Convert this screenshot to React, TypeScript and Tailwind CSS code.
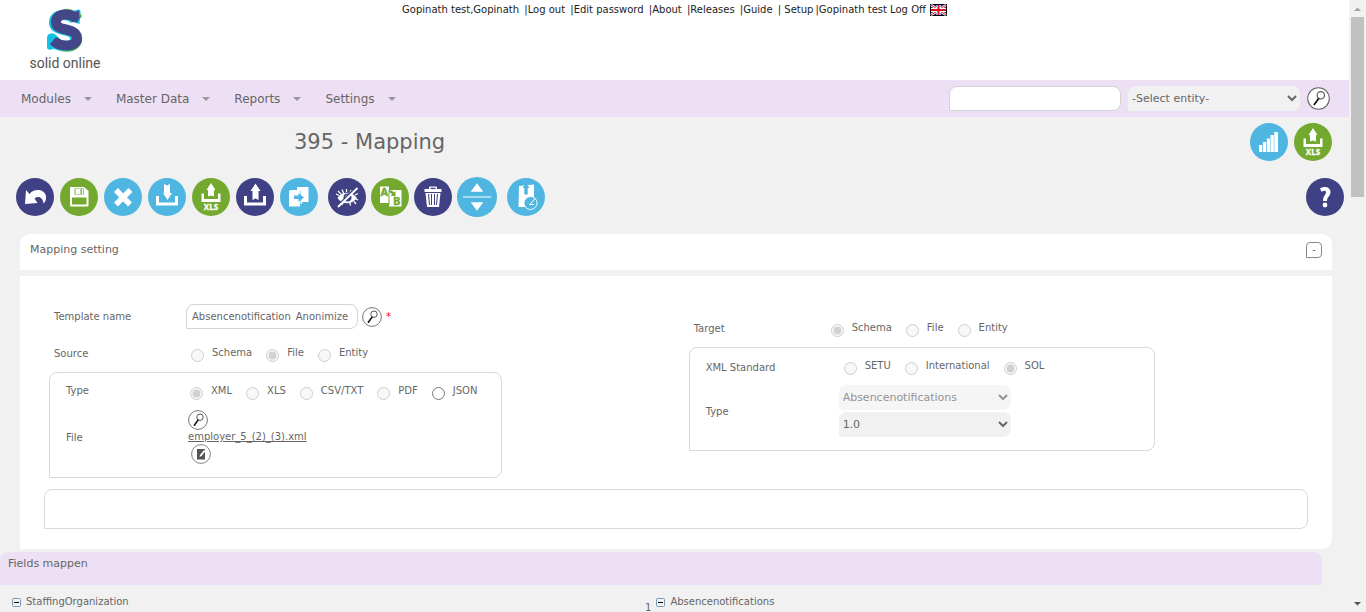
import { useId, type ReactNode } from "react";

const NAVY = "#3f4184";
const GREEN = "#72a92e";
const BLUE = "#4fb5e1";

function Logo() {
  const s =
    "M78 20 C75 15 71 14.500 66 14.500 C60 14.500 57 18 57 22 C57 27 61 28.500 67 29.500 C74 31 78 33 78 38.500 C78 43.500 73 45.500 67 45.500 C62 45.500 58 44 55 41";
  return (
    <svg viewBox="46 7 40 46" className="h-[46px] w-10" fill="none" aria-hidden="true">
      <path d="M50 34 Q54 32 57 35 L62 40 L54 49 Q48 51 48 47 V38 Q48 35 50 34Z" fill="#14c1e4" />
      <path d="M73 11 L80 9.500 Q82 10 81.500 14 L80.500 24 L74 22Z" fill="#14c1e4" />
      <path d="M57 45 C60 48 64 48.500 68 48.500 C76 48.500 80 44 80 38" stroke="#4db748" strokeWidth="6.500" />
      <path d="M62 11 C66 9 70 9 74 11" stroke="#4db748" strokeWidth="1.500" />
      <path d={s} stroke="#14c1e4" strokeWidth="10" transform="translate(-2 .5)" />
      <path d={s} stroke="#434787" strokeWidth="10" />
      <path d="M76 12 L80 10.500 L81 17 L77.500 23 L72 18Z M51 44 L57 37 L62 43 L56 48Z" fill="#434787" />
      <path d="M80 12 L83 16 L80.500 18.500Z" fill="#4db748" />
    </svg>
  );
}

function Flag() {
  return (
    <svg viewBox="0 0 17 12" className="ml-0.5 h-3 w-[17px]" aria-label="English" role="img">
      <rect width="17" height="12" fill="#000" />
      <rect x="1" y="1" width="15" height="10" fill="#1a2f9c" />
      <path d="M1 1 L16 11 M16 1 L1 11" stroke="#fff" strokeWidth="2.400" />
      <path d="M1 1 L16 11 M16 1 L1 11" stroke="#e0202c" strokeWidth="1" />
      <path d="M8.500 1 V11 M1 6 H16" stroke="#fff" strokeWidth="4" />
      <path d="M8.500 1 V11 M1 6 H16" stroke="#e0101c" strokeWidth="2" />
    </svg>
  );
}

function RoundButton({ color, label, big, children }: { color: string; label: string; big?: boolean; children: ReactNode }) {
  return (
    <button type="button" aria-label={label} title={label} className="shrink-0">
      <svg viewBox="0 0 38 38" className={big ? "size-10" : "size-[38px]"} fill="#fff">
        <circle cx="19" cy="19" r="19" fill={color} />
        {children}
      </svg>
    </button>
  );
}

const trayUp = (
  <>
    <path d="M19 5 L23.500 12 H22 V18.500 L19 17.500 L16 18.500 V12 H14.500Z" />
    <path d="M9.500 15.500 H12 V21 H26 V15.500 H28.500 V24 H9.500Z" />
    <text x="19" y="32" fontSize="8" fontWeight="700" fontFamily="Open Sans, sans-serif" textAnchor="middle" stroke="#fff" strokeWidth=".3">XLS</text>
  </>
);

const bars = (
  <path d="M9 22 h3.200 v7 h-3.200z M12.900 19 h3.200 v10 h-3.200z M16.800 15.500 h3.200 v13.500 h-3.200z M20.500 12 h3.300 v17 h-3.300z M24.300 9 h3.700 v20 h-3.700z" />
);

function Magnifier({ large }: { large?: boolean }) {
  return (
    <svg viewBox="0 0 20 20" className={large ? "size-[23px]" : "size-5"} fill="none">
      <circle cx="10" cy="10" r="9.400" fill="#fff" stroke="#666" strokeWidth=".9" />
      <circle cx="12" cy="7.200" r="3.200" stroke="#555" strokeWidth="1" />
      <path d="M10.300 9.700 L6 15.700" stroke="#111" strokeWidth="1.500" />
    </svg>
  );
}

function NavItem({ children }: { children: ReactNode }) {
  return (
    <button type="button" className="flex items-center gap-[13px] text-[12px]">
      {children}
      <svg viewBox="0 0 8 4" className="h-1 w-2" fill="#999"><path d="M0 0H8L4 4Z" /></svg>
    </button>
  );
}

function RadioGroup({ options, value, enabled = [] }: { options: string[]; value: string; enabled?: string[] }) {
  const name = useId();
  return (
    <div className="flex items-start gap-3.5">
      {options.map((o) => (
        <label key={o} className="flex items-start gap-2 leading-3 whitespace-nowrap">
          <input type="radio" name={name} defaultChecked={o === value} disabled={!enabled.includes(o)} className="mt-0.5 size-[13px] shrink-0" />
          {o}
        </label>
      ))}
    </div>
  );
}

function Toggle() {
  return (
    <svg viewBox="0 0 9 9" className="size-[9px]">
      <rect x=".5" y=".5" width="8" height="8" rx="1" fill="#f4f2ee" stroke="#7898b5" />
      <path d="M2 4.500H7" stroke="#000" />
    </svg>
  );
}

const separated = ["Log out", "Edit password", "About", "Releases", "Guide"];
const selectClass = "h-[25px] w-[172px] rounded-lg rounded-bl-none bg-[#f1f1f1] text-[11px]";

export default function App() {
  return (
    <div className="flex h-screen overflow-hidden bg-[#f1f1f1] font-['DejaVu_Sans',Verdana,sans-serif] text-[10px] text-[#666]">
      <div className="min-w-0 flex-1">
        <header className="flex h-20 items-start bg-white">
          <div className="flex w-[130px] shrink-0 flex-col items-center pt-[7px]">
            <Logo />
            <span className="font-['Roboto',sans-serif] text-[14px] leading-5 text-[#555]">solid online</span>
          </div>
          <nav className="flex flex-1 items-center justify-center gap-0.5 pt-1 pr-[130px] leading-3 whitespace-pre text-[#222]">
            <span>Gopinath test,Gopinath </span>
            {separated.map((t) => (
              <span key={t}>|<a href="#">{t}</a> </span>
            ))}
            <span>| <a href="#">Setup</a></span>
            <span>|<a href="#">Gopinath test Log Off</a></span>
            <Flag />
          </nav>
        </header>

        <div className="flex h-[37px] items-center justify-between bg-[#ede0f4] pr-[19px] pl-[21px]">
          <nav className="flex gap-6">
            <NavItem>Modules</NavItem>
            <NavItem>Master Data</NavItem>
            <NavItem>Reports</NavItem>
            <NavItem>Settings</NavItem>
          </nav>
          <div className="flex items-center gap-[7px]">
            <input aria-label="Search" className="h-[25px] w-[172px] rounded-lg rounded-bl-none border border-[#d3d3d3] bg-white px-1.5" />
            <select aria-label="Entity" className={selectClass}>
              <option>-Select entity-</option>
            </select>
            <button type="button" aria-label="Search entity"><Magnifier large /></button>
          </div>
        </div>

        <div className="flex items-center justify-between pt-1.5 pr-[17px] pl-[294px]">
          <h1 className="text-[21px] leading-[38px]">395 - Mapping</h1>
          <div className="flex gap-1.5">
            <RoundButton color={BLUE} label="Statistics">{bars}</RoundButton>
            <RoundButton color={GREEN} label="Export XLS">{trayUp}</RoundButton>
          </div>
        </div>

        <div className="flex h-[73px] items-center justify-between pr-[5px] pb-0.5 pl-4">
          <div className="flex items-center gap-2.5">
            <div className="flex gap-1.5">
              <RoundButton color={NAVY} label="Back">
                <path d="M10 12 L13.500 16 C17 11 28 10 30 18 C30.500 22 29 24 27.500 25.500 C27 19.500 22.500 17.500 18.500 20.500 L21.500 25 L9 26Z" />
              </RoundButton>
              <RoundButton color={GREEN} label="Save">
                <path fillRule="evenodd" d="M10.500 9 H24 L28.500 13 V27.500 Q28.500 28.500 27.500 28.500 H11.500 Q10 28.500 10 27 V10 Q10 9 10.500 9Z M12 19.500 V26.500 H26.500 V19.500Z M14.500 10.500 V16.500 H24 V10.500Z" />
                <path d="M15.500 11 H20.500 V16 H15.500Z M21.800 11 h1.500 v5 h-1.500z" />
              </RoundButton>
              <RoundButton color={BLUE} label="Delete">
                <path d="M12 12 L26 26.500 M26.500 12 L12 26.500" stroke="#fff" strokeWidth="5.500" />
              </RoundButton>
              <RoundButton color={BLUE} label="Import">
                <path d="M16 6 L19 7.500 L22 6 V15 H24 L19.500 22 L15 15 H16Z M8 18 H11 V24.500 H27 V18 H30 V27.500 H8Z" />
              </RoundButton>
              <RoundButton color={GREEN} label="Export XLS">{trayUp}</RoundButton>
              <RoundButton color={NAVY} label="Export">
                <path d="M19.500 5.500 L24.500 13 H22.500 V22 L19.500 20.500 L16.500 22 V13 H14.500Z M8 18 H11 V24.500 H27 V18 H30 V27.500 H8Z" />
              </RoundButton>
              <RoundButton color={BLUE} label="Copy">
                <path d="M17 9 H28.500 V24 H22 V26 H20.500 V12.500 H17Z" />
                <path d="M9 13 L10.500 12 H20 V28.500 H9Z" />
                <path d="M14 17.500 H18.500 V15 L24 19.500 L18.500 24 V21 H14Z" fill={BLUE} />
              </RoundButton>
            </div>
            <div className="flex items-center gap-[5px]">
              <RoundButton color={NAVY} label="Hide">
                <path d="M9.500 20 C13 13 24 13 29 20 C24 27 14 27 9.500 20Z" />
                <circle cx="19.500" cy="19.500" r="4" fill={NAVY} />
                <circle cx="19" cy="18.500" r="1.500" />
                <g stroke="#fff" fill="none">
                  <path d="M8 16 L11 17.500 M10 13 L13 16 M14 11.500 L15.500 15 M18.500 11 V14 M23 12 L22 15 M27 17 L30 15.500 M28 21 L30 22 M26 23.500 L28 26 M22 25 L22.500 27.500 M15 24.500 L14 27" strokeWidth="1.300" />
                  <path d="M27.500 10 L9 29" stroke={NAVY} strokeWidth="2.500" />
                  <path d="M29.500 10 L10 29" strokeWidth="1.800" />
                </g>
              </RoundButton>
              <RoundButton color={GREEN} label="Translate">
                <path d="M9 8.500 H18 V25 H9Z" />
                <path d="M18 12 H30.500 V28.500 H18Z" />
                <path d="M18 12 V27" stroke={GREEN} />
                <text x="9.500" y="18" fontSize="11" fontWeight="700" fontFamily="Open Sans, sans-serif" fill={GREEN} stroke={GREEN} strokeWidth=".4">A</text>
                <text x="22" y="27" fontSize="11" fontWeight="700" fontFamily="Open Sans, sans-serif" fill={GREEN} stroke={GREEN} strokeWidth=".4">B</text>
                <path d="M18 12 Q21.500 12 23 14.500 L24.500 13 V18 H19.500 L21 16.500 Q20 14.500 18 14Z" fill={GREEN} />
              </RoundButton>
              <RoundButton color={NAVY} label="Trash">
                <path fillRule="evenodd" d="M15 9.500 Q15 8.500 16 8.500 H22 Q23 8.500 23 9.500 V11 H27.500 V14 H10.500 V11 H15Z M16.500 9.700 V11 H21.500 V9.700Z" />
                <path d="M11.500 15 H26.500 L25 29 H13Z" />
                <path d="M14.500 16 L15.500 27 M17.500 16 V27 M20.500 16 V27 M23.500 16 L22.500 27" stroke={NAVY} strokeWidth="1" />
              </RoundButton>
              <RoundButton color={BLUE} label="Expand" big>
                <path d="M19 6 L25 14 H13Z M19 32 L25 24 H13Z M5.500 18.500 H32.500 V19.500 H5.500Z" />
              </RoundButton>
            </div>
            <RoundButton color={BLUE} label="Schedule">
              <path d="M12 8 L27 6.500 V29 H11.500Z" />
              <path d="M19 5 L22.500 10 H20.700 V16.500 H17.300 V10 H15.500Z" fill={BLUE} />
              <circle cx="23.500" cy="25" r="6.500" fill={BLUE} stroke="#fff" strokeWidth=".9" />
              <path d="M23 26.500 L28 20.500 M22.500 26.500 H27" stroke="#fff" strokeWidth="1" />
            </RoundButton>
          </div>
          <RoundButton color={NAVY} label="Help">
            <path d="M14 10.500 C18 7.500 25 9 24.500 14.500 C24 18.500 21 19 21 23 H17 C17 17.500 20 17 20 14.500 C20 12 17.500 12.500 15.500 13.800Z" />
            <circle cx="19" cy="27" r="2.400" />
          </RoundButton>
        </div>

        <div className="mr-[17px] ml-5">
          <section className="flex h-9 items-start justify-between rounded-t-[10px] bg-white px-2.5 pt-2">
            <h2 className="text-[11px] leading-4">Mapping setting</h2>
            <button type="button" aria-label="Collapse" className="flex size-4 items-center justify-center rounded rounded-bl-none border border-[#888] leading-3">-</button>
          </section>
          <section className="mt-1.5 rounded-br-[10px] bg-white px-6 pt-7 pb-5">
            <div className="grid grid-cols-[51%_1fr]">
              <div className="pl-[5px]">
                <div className="flex h-[25px] items-center pl-[5px]">
                  <label htmlFor="template" className="w-[132px]">Template name</label>
                  <input id="template" defaultValue="Absencenotification_Anonimize" className="h-[25px] w-[172px] rounded-lg rounded-bl-none border border-[#d3d3d3] px-[5px] leading-4" />
                  <button type="button" aria-label="Find template" className="ml-1"><Magnifier /></button>
                  <span className="ml-1 text-[#f00]">*</span>
                </div>
                <div className="mt-[18px] flex h-[25px] items-start pl-[5px]">
                  <span className="w-[137px] leading-[14px]">Source</span>
                  <RadioGroup options={["Schema", "File", "Entity"]} value="File" />
                </div>
                <div className="h-[106px] max-w-[453px] rounded-lg rounded-bl-none border border-[#d9d9d9] px-4 pt-3">
                  <div className="flex">
                    <span className="w-[124px] leading-3">Type</span>
                    <RadioGroup options={["XML", "XLS", "CSV/TXT", "PDF", "JSON"]} value="XML" enabled={["JSON"]} />
                  </div>
                  <div className="mt-2.5 flex items-center">
                    <span className="w-[122px]">File</span>
                    <div className="flex flex-col items-start">
                      <button type="button" aria-label="Find file"><Magnifier /></button>
                      <a href="#" className="leading-[14px] underline">employer_5_(2)_(3).xml</a>
                      <button type="button" aria-label="Edit file" className="ml-[3px]">
                        <svg viewBox="0 0 20 20" className="size-5">
                          <circle cx="10" cy="10" r="9.400" fill="#fff" stroke="#777" strokeWidth=".9" />
                          <path d="M6 5 H14 V15.500 H6Z" fill="#555" />
                          <path d="M8.500 13 L9 11 L13 6 L14.500 7 L10.500 12Z" fill="#fff" />
                        </svg>
                      </button>
                    </div>
                  </div>
                </div>
              </div>
              <div className="pt-[18px]">
                <div className="flex h-[25px] items-start pl-[5px]">
                  <span className="w-[137px] leading-[14px]">Target</span>
                  <RadioGroup options={["Schema", "File", "Entity"]} value="Schema" />
                </div>
                <div className="h-[104px] max-w-[466px] rounded-lg rounded-bl-none border border-[#d9d9d9] px-4 pt-3">
                  <div className="flex">
                    <span className="w-[138px] leading-4">XML Standard</span>
                    <RadioGroup options={["SETU", "International", "SOL"]} value="SOL" />
                  </div>
                  <div className="mt-[9px] flex items-center">
                    <label htmlFor="type" className="w-[133px]">Type</label>
                    <div className="flex flex-col gap-0.5">
                      <select id="type" disabled className={`${selectClass} opacity-70`}>
                        <option>Absencenotifications</option>
                      </select>
                      <select aria-label="Version" className={selectClass}>
                        <option>1.0</option>
                      </select>
                    </div>
                  </div>
                </div>
              </div>
            </div>
            <div className="mt-[11px] h-10 rounded-lg rounded-bl-none border border-[#d9d9d9]" />
          </section>
        </div>

        <section className="mt-[3px] mr-[27px] h-[33px] rounded-t-lg bg-[#ede0f4] px-2 pt-1 text-[11px] leading-4">Fields mappen</section>
        <div className="grid grid-cols-[645px_1fr] pt-2.5">
          <div className="flex items-center gap-[5px] self-start pl-3 leading-[14px]"><Toggle />StaffingOrganization</div>
          <div className="flex items-start gap-[5px] leading-[14px]">
            <span className="pt-1.5">1</span>
            <span className="flex items-center gap-[5px]"><Toggle />Absencenotifications</span>
          </div>
        </div>
      </div>

      <div className="flex w-[17px] shrink-0 flex-col items-center bg-[#f1f1f1]" aria-hidden="true">
        <svg viewBox="0 0 17 17" className="size-[17px]" fill="#a3a3a3"><path d="M5 11 L8.500 7.500 L12 11Z" /></svg>
        <div className="h-[180px] w-[13px] bg-[#c1c1c1]" />
        <svg viewBox="0 0 17 17" className="mt-auto size-[17px]" fill="#505050"><path d="M5 7 L8.500 10.500 L12 7Z" /></svg>
      </div>
    </div>
  );
}
